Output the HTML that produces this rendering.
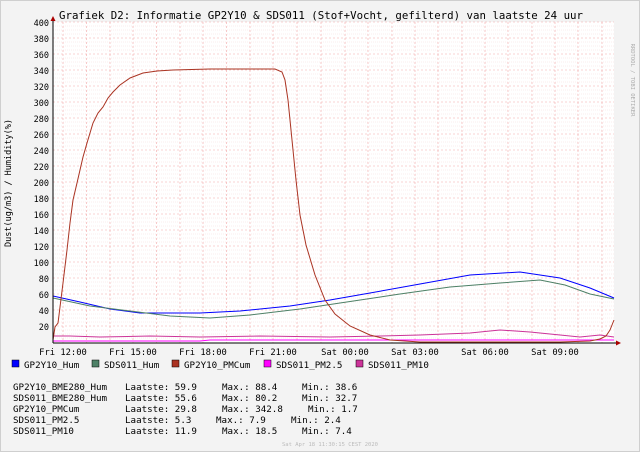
<!DOCTYPE html>
<html><head><meta charset="utf-8"><style>
html,body{margin:0;padding:0;background:#f3f3f3;}
svg{display:block;font-family:"DejaVu Sans Mono","Liberation Mono",monospace;}
</style></head><body>
<svg width="640" height="452" viewBox="0 0 640 452" xmlns="http://www.w3.org/2000/svg">
<rect x="0" y="0" width="640" height="452" fill="#f3f3f3"/>
<rect x="0.5" y="0.5" width="639" height="451" fill="none" stroke="#cfcfcf"/>
<rect x="53" y="22" width="561" height="321" fill="#ffffff"/>
<g stroke="#f6dcdc" stroke-width="0.5" stroke-dasharray="1,1">
<path d="M53 26H614M53 30H614M53 34H614M53 42H614M53 46H614M53 50H614M53 58H614M53 62H614M53 66H614M53 74H614M53 78H614M53 82H614M53 90H614M53 94H614M53 98H614M53 106H614M53 110H614M53 114H614M53 122H614M53 126H614M53 130H614M53 138H614M53 142H614M53 146H614M53 154H614M53 158H614M53 162H614M53 170H614M53 174H614M53 178H614M53 186H614M53 190H614M53 194H614M53 202H614M53 206H614M53 210H614M53 218H614M53 222H614M53 226H614M53 234H614M53 238H614M53 242H614M53 250H614M53 254H614M53 258H614M53 266H614M53 270H614M53 274H614M53 282H614M53 286H614M53 290H614M53 298H614M53 302H614M53 306H614M53 314H614M53 318H614M53 322H614M53 330H614M53 334H614M53 338H614"/>
</g>
<g stroke="#f2a8a8" stroke-width="0.6" stroke-dasharray="2,2">
<path d="M53 22H614M53 38H614M53 54H614M53 70H614M53 86H614M53 102H614M53 118H614M53 134H614M53 150H614M53 166H614M53 182H614M53 198H614M53 214H614M53 230H614M53 246H614M53 262H614M53 278H614M53 294H614M53 310H614M53 326H614"/>
<path d="M63 22V343M86.5 22V343M110 22V343M133 22V343M156.5 22V343M180 22V343M203 22V343M226.5 22V343M250 22V343M273 22V343M297 22V343M321 22V343M345 22V343M368 22V343M392 22V343M415 22V343M438 22V343M462 22V343M485 22V343M508 22V343M532 22V343M555 22V343M578 22V343M602 22V343"/>
</g>
<g fill="none" stroke-width="1">
<path stroke="#ff00ff" d="M53 341H200L210 340H614"/>
<path stroke="#cc3399" d="M53 336L70 336L100 337L150 336L200 337L260 336L330 337L380 336L420 335L470 333L500 330L530 332L560 335L580 337L600 335L614 337"/>
<path stroke="#0000ff" d="M53 296L80 302L110 309L140 313L200 313L240 311L290 306L330 300L370 293L420 284L470 275L520 272L560 278L590 288L614 298"/>
<path stroke="#4d8066" d="M53 298L90 306L130 311L170 316L210 318L250 315L300 309L340 303L400 294L450 287L500 283L540 280L565 285L590 294L614 299"/>
<path stroke="#aa3322" d="M53 340L55 327L58 323L63 283L67 250L70 223L73 200L77 183L80 170L83 157L87 143L90 133L93 123L98 113L103 107L108 98L113 92L120 85L130 78L143 73L157 71L173 70L210 69L275 69L282 72L285 80L288 100L292 140L296 180L300 215L306 245L315 275L325 300L335 314L350 326L370 335L390 340L420 342L560 342L590 341L600 339L606 336L610 330L614 320"/>
</g>
<path d="M53 18V343M53 343H618" stroke="#000" stroke-width="1"/>
<path d="M50.5 21L53 16L55.5 21Z" fill="#a00"/>
<path d="M616 340.5L621 343L616 345.5Z" fill="#a00"/>
<g font-size="8.5" fill="#000" text-anchor="end">
<text x="49" y="26">400</text><text x="49" y="42">380</text><text x="49" y="58">360</text><text x="49" y="74">340</text><text x="49" y="90">320</text><text x="49" y="106">300</text><text x="49" y="122">280</text><text x="49" y="138">260</text><text x="49" y="154">240</text><text x="49" y="170">220</text><text x="49" y="186">200</text><text x="49" y="202">180</text><text x="49" y="218">160</text><text x="49" y="234">140</text><text x="49" y="250">120</text><text x="49" y="266">100</text><text x="49" y="282">80</text><text x="49" y="298">60</text><text x="49" y="314">40</text><text x="49" y="330">20</text>
</g>
<g font-size="8.8" fill="#000" text-anchor="middle">
<text x="63" y="355">Fri 12:00</text><text x="133" y="355">Fri 15:00</text><text x="203" y="355">Fri 18:00</text><text x="273" y="355">Fri 21:00</text><text x="345" y="355">Sat 00:00</text><text x="415" y="355">Sat 03:00</text><text x="485" y="355">Sat 06:00</text><text x="555" y="355">Sat 09:00</text>
</g>
<text x="59" y="19" font-size="10.5" fill="#000" textLength="524" lengthAdjust="spacingAndGlyphs">Grafiek D2: Informatie GP2Y10 &amp; SDS011 (Stof+Vocht, gefilterd) van laatste 24 uur</text>
<text transform="translate(11,183) rotate(-90)" font-size="8.5" text-anchor="middle" fill="#000">Dust(ug/m3) / Humidity(%)</text>
<text transform="translate(631,80) rotate(90)" font-size="5.5" text-anchor="middle" fill="#aaa">RRDTOOL / TOBI OETIKER</text>
<g font-size="9.2" fill="#000">
<rect x="12" y="360" width="7" height="7" fill="#0000ff" stroke="#000" stroke-width="0.5"/><text x="24" y="368">GP2Y10_Hum</text>
<rect x="92" y="360" width="7" height="7" fill="#4d8066" stroke="#000" stroke-width="0.5"/><text x="104" y="368">SDS011_Hum</text>
<rect x="172" y="360" width="7" height="7" fill="#aa3322" stroke="#000" stroke-width="0.5"/><text x="184" y="368">GP2Y10_PMCum</text>
<rect x="264" y="360" width="7" height="7" fill="#ff00ff" stroke="#000" stroke-width="0.5"/><text x="276" y="368">SDS011_PM2.5</text>
<rect x="356" y="360" width="7" height="7" fill="#cc3399" stroke="#000" stroke-width="0.5"/><text x="368" y="368">SDS011_PM10</text>
<text x="13" y="390">GP2Y10_BME280_Hum</text><text x="125" y="390">Laatste: 59.9</text><text x="222" y="390">Max.: 88.4</text><text x="302" y="390">Min.: 38.6</text>
<text x="13" y="401">SDS011_BME280_Hum</text><text x="125" y="401">Laatste: 55.6</text><text x="222" y="401">Max.: 80.2</text><text x="302" y="401">Min.: 32.7</text>
<text x="13" y="412">GP2Y10_PMCum</text><text x="125" y="412">Laatste: 29.8</text><text x="222" y="412">Max.: 342.8</text><text x="308" y="412">Min.: 1.7</text>
<text x="13" y="423">SDS011_PM2.5</text><text x="125" y="423">Laatste: 5.3</text><text x="216" y="423">Max.: 7.9</text><text x="291" y="423">Min.: 2.4</text>
<text x="13" y="434">SDS011_PM10</text><text x="125" y="434">Laatste: 11.9</text><text x="222" y="434">Max.: 18.5</text><text x="302" y="434">Min.: 7.4</text>
</g>
<text x="378" y="446" font-size="5.5" fill="#bbb" text-anchor="end">Sat Apr 18 11:30:15 CEST 2020</text>
</svg>
</body></html>
